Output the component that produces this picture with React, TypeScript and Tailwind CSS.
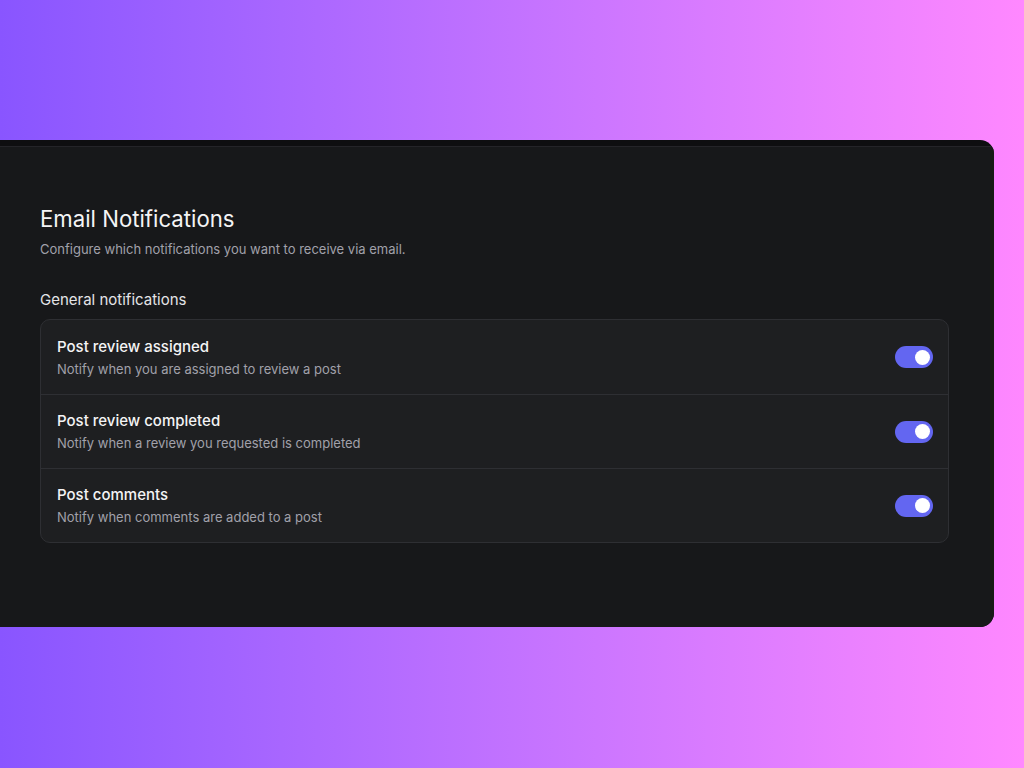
import React from "react";

const rows = [
  { title: "Post review assigned", desc: "Notify when you are assigned to review a post" },
  { title: "Post review completed", desc: "Notify when a review you requested is completed" },
  { title: "Post comments", desc: "Notify when comments are added to a post" },
];

function Toggle() {
  return (
    <div className="w-[38px] h-[22px] rounded-full bg-[#6366f1] flex items-center justify-end pr-[3px] shrink-0">
      <div className="w-[15px] h-[15px] rounded-full bg-white" />
    </div>
  );
}

export default function App() {
  return (
    <div
      className="w-[1024px] h-[768px] overflow-hidden bg-gradient-to-r from-[#8955ff] to-[#ff88ff] flex flex-col pt-[140px]"
      style={{ fontFamily: "Inter, 'Noto Sans', sans-serif" }}
    >
      <div className="w-[994px] h-[487px] rounded-r-[14px] bg-[#0e0e10] pt-[6px] overflow-hidden">
        <div className="h-full border-t border-[#242428] bg-[#17181a] pl-[40px] pr-[45px] pt-[58px]">
          <h1 className="text-[22.2px] leading-[28px] text-[#f4f4f5] font-normal">Email Notifications</h1>
          <p className="mt-[7px] text-[13px] leading-[18px] text-[#a1a1aa]">
            Configure which notifications you want to receive via email.
          </p>
          <h2 className="mt-[32px] text-[15px] leading-[20px] text-[#e4e4e7]">General notifications</h2>
          <div className="mt-[9px] rounded-[10px] border border-[#2e2f33] bg-[#1e1f21]">
            {rows.map((r, i) => (
              <div
                key={r.title}
                className={`flex items-center justify-between h-[74px] pl-[16px] pr-[15px] ${i > 0 ? "border-t border-[#2e2f33]" : ""}`}
              >
                <div className="flex flex-col">
                  <span className="text-[15px] leading-[20px] text-[#f4f4f5] font-medium">{r.title}</span>
                  <span className="mt-[3px] text-[13px] leading-[18px] text-[#a1a1aa]">{r.desc}</span>
                </div>
                <Toggle />
              </div>
            ))}
          </div>
        </div>
      </div>
    </div>
  );
}
